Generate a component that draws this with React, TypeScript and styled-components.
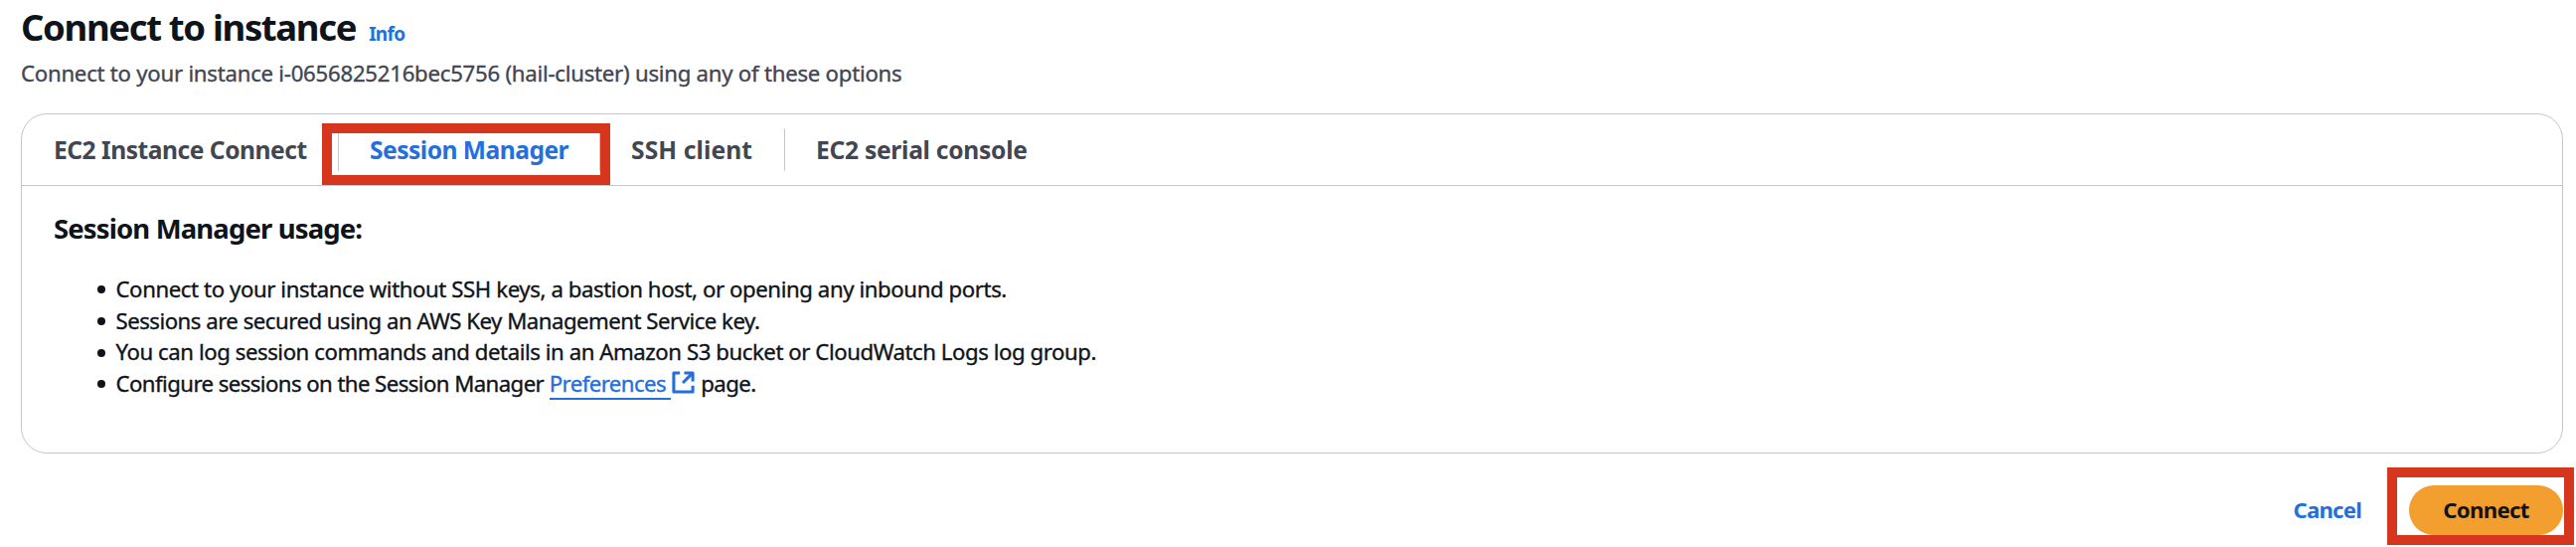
import React from 'react';
import styled, { createGlobalStyle } from 'styled-components';

const GlobalStyle = createGlobalStyle`
  * { box-sizing: border-box; }
  body {
    margin: 0;
    background: #fff;
    color: #0f141a;
    font-family: 'Noto Sans', 'Open Sans', sans-serif;
    font-size: 22.2px;
    line-height: 32px;
  }
`;

const Page = styled.main`
  display: flex;
  flex-direction: column;
  width: 2592px;
  height: 550px;
  padding: 2px 13px 0 21px;
  overflow: hidden;
`;

const TitleRow = styled.header`
  display: flex;
  align-items: baseline;
  gap: 13px;
  height: 50px;
`;

const Title = styled.h1`
  margin: 0;
  font-size: 36.5px;
  line-height: 50px;
  font-weight: 700;
  letter-spacing: -1.35px;
`;

const InfoLink = styled.a`
  color: #246fdc;
  font-size: 19px;
  font-weight: 700;
  letter-spacing: -0.7px;
`;

const Description = styled.p`
  margin: 6px 0 24px;
  color: #424650;
  letter-spacing: -0.25px;
  -webkit-text-stroke: 0.35px currentColor;
`;

const Panel = styled.section`
  width: 2558px;
  height: 342px;
  border: 1px solid #c6c6cd;
  border-radius: 26px;
`;

const TabList = styled.nav`
  display: flex;
  align-items: center;
  height: 72px;
  padding-left: 1px;
  border-bottom: 1px solid #c6c6cd;
`;

const Tab = styled.a<{ $width: number; $spacing: number; $active?: boolean }>`
  position: relative;
  width: ${(p) => p.$width}px;
  height: 43px;
  padding-left: 31px;
  border-right: 1px solid #c6c6cd;
  color: ${(p) => (p.$active ? '#246fdc' : '#424650')};
  font-size: 24.6px;
  line-height: 43px;
  font-weight: 700;
  letter-spacing: ${(p) => p.$spacing}px;
  white-space: nowrap;
  &:last-child { border-right: 0; }
`;

const TabHighlight = styled.span`
  position: absolute;
  left: -17px;
  top: -5px;
  width: 290px;
  height: 62px;
  border: 10px solid #d6351e;
`;

const UsageTitle = styled.h3`
  margin: 23px 0 0 32px;
  font-size: 27.5px;
  line-height: 40px;
  font-weight: 700;
  letter-spacing: -0.87px;
`;

const UsageList = styled.ul`
  display: flex;
  flex-direction: column;
  margin: 25px 0 0 76px;
  padding: 0;
  list-style: none;
`;

const UsageItem = styled.li<{ $spacing: number }>`
  display: flex;
  align-items: center;
  height: 31.7px;
  line-height: 31.7px;
  letter-spacing: ${(p) => p.$spacing}px;
  white-space: pre;
  -webkit-text-stroke: 0.35px currentColor;
  &::before {
    content: '';
    width: 8px;
    height: 8px;
    margin: 1px 11px 0 -0.5px;
    border-radius: 50%;
    background: #0f141a;
  }
`;

const PreferencesLink = styled.a`
  align-self: flex-start;
  width: 122px;
  height: 32px;
  margin-left: 5.5px;
  border-bottom: 2px solid #246fdc;
  color: #246fdc;
`;

const ExternalIcon = styled.svg`
  width: 23px;
  height: 23px;
  margin: 0 6px 2px 1.5px;
  fill: none;
  stroke: #246fdc;
  stroke-width: 3.2;
  stroke-linejoin: round;
`;

const Actions = styled.footer`
  display: flex;
  justify-content: flex-end;
  align-items: center;
  height: 50px;
  margin-top: 32px;
`;

const CancelButton = styled.button`
  padding: 0;
  margin-right: 48px;
  border: 0;
  background: none;
  color: #246fdc;
  font: 700 22.2px/50px 'Noto Sans', sans-serif;
  letter-spacing: -0.8px;
`;

const ConnectButton = styled.button`
  position: relative;
  width: 155px;
  height: 50px;
  padding: 0;
  border: 0;
  border-radius: 25px;
  background: #f29f2f;
  color: #0f141a;
  font: 700 22.2px/50px 'Noto Sans', sans-serif;
  letter-spacing: -0.65px;
`;

const ConnectHighlight = styled.span`
  position: absolute;
  left: -22px;
  top: -18px;
  width: 188px;
  height: 78px;
  border: 10px solid #d6351e;
`;

export default function App() {
  return (
    <Page>
      <GlobalStyle />
      <TitleRow>
        <Title>Connect to instance</Title>
        <InfoLink>Info</InfoLink>
      </TitleRow>
      <Description>Connect to your instance i-0656825216bec5756 (hail-cluster) using any of these options</Description>
      <Panel>
        <TabList>
          <Tab $width={318} $spacing={-0.48}>EC2 Instance Connect</Tab>
          <Tab $width={263} $spacing={-0.52} $active>Session Manager<TabHighlight /></Tab>
          <Tab $width={186} $spacing={0.1}>SSH client</Tab>
          <Tab $width={260} $spacing={-0.28}>EC2 serial console</Tab>
        </TabList>
        <UsageTitle>Session Manager usage:</UsageTitle>
        <UsageList>
          <UsageItem $spacing={-0.41}>Connect to your instance without SSH keys, a bastion host, or opening any inbound ports.</UsageItem>
          <UsageItem $spacing={-0.5}>Sessions are secured using an AWS Key Management Service key.</UsageItem>
          <UsageItem $spacing={-0.44}>You can log session commands and details in an Amazon S3 bucket or CloudWatch Logs log group.</UsageItem>
          <UsageItem $spacing={-0.57}>
            Configure sessions on the Session Manager
            <PreferencesLink>Preferences</PreferencesLink>
            <ExternalIcon viewBox="0 0 24 24">
              <path d="M8.5 2H2V22H22V15.5M13 2H22V11M22 2L11.5 12.5" />
            </ExternalIcon>
            page.
          </UsageItem>
        </UsageList>
      </Panel>
      <Actions>
        <CancelButton>Cancel</CancelButton>
        <ConnectButton>Connect<ConnectHighlight /></ConnectButton>
      </Actions>
    </Page>
  );
}
